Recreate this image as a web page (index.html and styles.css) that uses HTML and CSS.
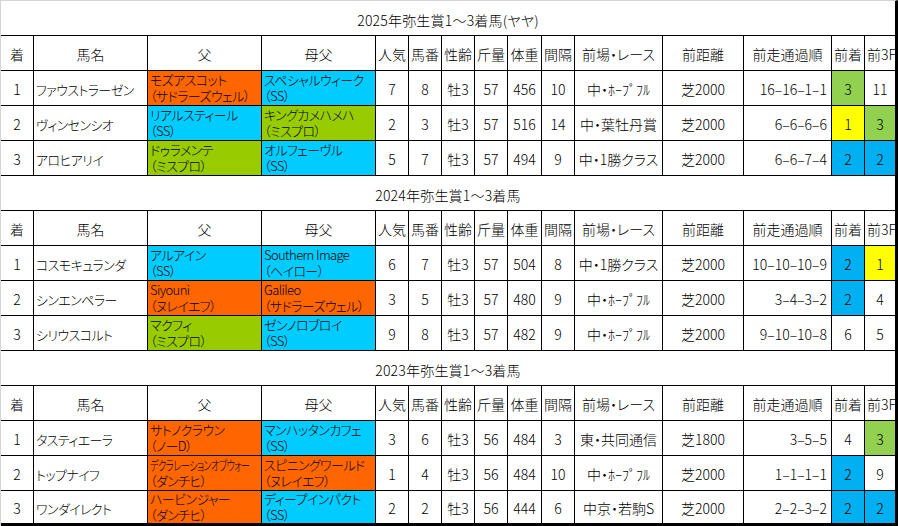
FILE: index.html
```html
<!DOCTYPE html>
<html lang="ja">
<head>
<meta charset="utf-8">
<title>弥生賞1～3着馬</title>
<link rel="stylesheet" href="styles.css">
</head>
<body>
<div class="sheet">
  <div class="title">2025年弥生賞1～3着馬(ヤヤ)</div>
  <div class="row">
    <div class="c">着</div><div class="c">馬名</div><div class="c">父</div><div class="c">母父</div><div class="c">人気</div><div class="c">馬番</div><div class="c">性齢</div><div class="c">斤量</div><div class="c">体重</div><div class="c">間隔</div><div class="c">前場・レース</div><div class="c">前距離</div><div class="c">前走通過順</div><div class="c">前着</div><div class="c f3">前3F</div>
  </div>
  <div class="row">
    <div class="c">1</div><div class="c l">ファウストラーゼン</div><div class="c two orange">モズアスコット<br>（サドラーズウェル）</div><div class="c two cyan">スペシャルウィーク<br>（SS）</div><div class="c">7</div><div class="c">8</div><div class="c">牡3</div><div class="c">57</div><div class="c">456</div><div class="c">10</div><div class="c">中・ﾎｰﾌﾟﾌﾙ</div><div class="c">芝2000</div><div class="c r">16–16–1–1</div><div class="c lgreen">3</div><div class="c">11</div>
  </div>
  <div class="row">
    <div class="c">2</div><div class="c l">ヴィンセンシオ</div><div class="c two cyan">リアルスティール<br>（SS）</div><div class="c two green">キングカメハメハ<br>（ミスプロ）</div><div class="c">2</div><div class="c">3</div><div class="c">牡3</div><div class="c">57</div><div class="c">516</div><div class="c">14</div><div class="c">中・葉牡丹賞</div><div class="c">芝2000</div><div class="c r">6–6–6–6</div><div class="c yellow">1</div><div class="c lgreen">3</div>
  </div>
  <div class="row">
    <div class="c">3</div><div class="c l">アロヒアリイ</div><div class="c two green">ドゥラメンテ<br>（ミスプロ）</div><div class="c two cyan">オルフェーヴル<br>（SS）</div><div class="c">5</div><div class="c">7</div><div class="c">牡3</div><div class="c">57</div><div class="c">494</div><div class="c">9</div><div class="c">中・1勝クラス</div><div class="c">芝2000</div><div class="c r">6–6–7–4</div><div class="c blue">2</div><div class="c blue">2</div>
  </div>

  <div class="title">2024年弥生賞1～3着馬</div>
  <div class="row">
    <div class="c">着</div><div class="c">馬名</div><div class="c">父</div><div class="c">母父</div><div class="c">人気</div><div class="c">馬番</div><div class="c">性齢</div><div class="c">斤量</div><div class="c">体重</div><div class="c">間隔</div><div class="c">前場・レース</div><div class="c">前距離</div><div class="c">前走通過順</div><div class="c">前着</div><div class="c f3">前3F</div>
  </div>
  <div class="row">
    <div class="c">1</div><div class="c l">コスモキュランダ</div><div class="c two cyan">アルアイン<br>（SS）</div><div class="c two cyan">Southern Image<br>（ヘイロー）</div><div class="c">6</div><div class="c">7</div><div class="c">牡3</div><div class="c">57</div><div class="c">504</div><div class="c">8</div><div class="c">中・1勝クラス</div><div class="c">芝2000</div><div class="c r">10–10–10–9</div><div class="c blue">2</div><div class="c yellow">1</div>
  </div>
  <div class="row">
    <div class="c">2</div><div class="c l">シンエンペラー</div><div class="c two orange">Siyouni<br>（ヌレイエフ）</div><div class="c two orange">Galileo<br>（サドラーズウェル）</div><div class="c">3</div><div class="c">5</div><div class="c">牡3</div><div class="c">57</div><div class="c">480</div><div class="c">9</div><div class="c">中・ﾎｰﾌﾟﾌﾙ</div><div class="c">芝2000</div><div class="c r">3–4–3–2</div><div class="c blue">2</div><div class="c">4</div>
  </div>
  <div class="row">
    <div class="c">3</div><div class="c l">シリウスコルト</div><div class="c two green">マクフィ<br>（ミスプロ）</div><div class="c two cyan">ゼンノロブロイ<br>（SS）</div><div class="c">9</div><div class="c">8</div><div class="c">牡3</div><div class="c">57</div><div class="c">482</div><div class="c">9</div><div class="c">中・ﾎｰﾌﾟﾌﾙ</div><div class="c">芝2000</div><div class="c r">9–10–10–8</div><div class="c">6</div><div class="c">5</div>
  </div>

  <div class="title">2023年弥生賞1～3着馬</div>
  <div class="row">
    <div class="c">着</div><div class="c">馬名</div><div class="c">父</div><div class="c">母父</div><div class="c">人気</div><div class="c">馬番</div><div class="c">性齢</div><div class="c">斤量</div><div class="c">体重</div><div class="c">間隔</div><div class="c">前場・レース</div><div class="c">前距離</div><div class="c">前走通過順</div><div class="c">前着</div><div class="c f3">前3F</div>
  </div>
  <div class="row">
    <div class="c">1</div><div class="c l">タスティエーラ</div><div class="c two orange">サトノクラウン<br>（ノーD）</div><div class="c two cyan">マンハッタンカフェ<br>（SS）</div><div class="c">3</div><div class="c">6</div><div class="c">牡3</div><div class="c">56</div><div class="c">484</div><div class="c">3</div><div class="c">東・共同通信</div><div class="c">芝1800</div><div class="c r">3–5–5</div><div class="c">4</div><div class="c lgreen">3</div>
  </div>
  <div class="row">
    <div class="c">2</div><div class="c l">トップナイフ</div><div class="c two orange"><span class="squeeze">デクラレーションオブウォー</span><br>（ダンチヒ）</div><div class="c two orange">スピニングワールド<br>（ヌレイエフ）</div><div class="c">1</div><div class="c">4</div><div class="c">牡3</div><div class="c">56</div><div class="c">484</div><div class="c">10</div><div class="c">中・ﾎｰﾌﾟﾌﾙ</div><div class="c">芝2000</div><div class="c r">1–1–1–1</div><div class="c blue">2</div><div class="c">9</div>
  </div>
  <div class="row last">
    <div class="c">3</div><div class="c l">ワンダイレクト</div><div class="c two orange">ハービンジャー<br>（ダンチヒ）</div><div class="c two cyan">ディープインパクト<br>（SS）</div><div class="c">2</div><div class="c">2</div><div class="c">牡3</div><div class="c">56</div><div class="c">444</div><div class="c">6</div><div class="c">中京・若駒S</div><div class="c">芝2000</div><div class="c r">2–2–3–2</div><div class="c blue">2</div><div class="c blue">2</div>
  </div>
</div>
</body>
</html>
```
FILE: styles.css
```css
html, body {
  margin: 0;
  padding: 0;
  background: #fff;
}

body {
  font-family: "Noto Sans CJK JP", "Noto Sans", sans-serif;
  font-weight: 300;
  font-size: 14px;
  color: #000;
  font-feature-settings: "palt";
}

.sheet {
  width: 898px;
  height: 526px;
  box-sizing: border-box;
  border-left: 1px solid #d4d4d4;
  border-top: 1px solid #d4d4d4;
  border-right: 3px solid #000;
  overflow: hidden;
}

.title {
  height: 35px;
  box-sizing: border-box;
  border-bottom: 1px solid #000;
  display: flex;
  align-items: center;
  justify-content: center;
  padding-top: 3px;
  white-space: nowrap;
  letter-spacing: 0.2px;
}

.row {
  display: grid;
  grid-template-columns: 33px 114px 114px 114px 33px 33px 33px 33px 34px 33px 88px 81px 88px 33px 30px;
  height: 35px;
  box-sizing: border-box;
  border-bottom: 1px solid #000;
}

.row.last {
  border-bottom-width: 3px;
}

.c {
  box-sizing: border-box;
  border-right: 1px solid #000;
  display: flex;
  align-items: center;
  justify-content: center;
  white-space: nowrap;
  overflow: hidden;
  line-height: 17px;
  padding-top: 2px;
}

.c:last-child {
  border-right: none;
}

.l {
  justify-content: flex-start;
  padding-left: 2px;
  font-size: 13px;
  letter-spacing: -0.6px;
}

.r {
  justify-content: flex-end;
  padding-right: 4px;
}

.f3 {
  justify-content: flex-start;
  padding-left: 2px;
}

.two {
  display: block;
  padding-top: 1px;
  padding-left: 2px;
  font-size: 13px;
  line-height: 16px;
  letter-spacing: -0.6px;
}

.row.last .two {
  padding-top: 0;
}

.squeeze {
  display: inline-block;
  letter-spacing: -0.8px;
  transform: scaleX(0.71);
  transform-origin: left center;
}

.orange { background: #ff6600; }
.cyan { background: #00ccff; }
.green { background: #99cc00; }
.lgreen { background: #92d050; }
.yellow { background: #ffff00; }
.blue { background: #00b0f0; }
```
